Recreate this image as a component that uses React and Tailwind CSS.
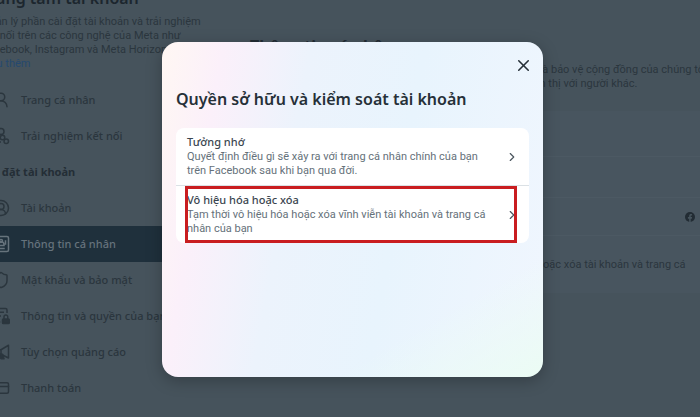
import { CircleUserRound, CreditCard, Shield, UserRound, X, ChevronRight } from 'lucide-react';

const profileLinks = [
  { label: 'Trang cá nhân', icon: <UserRound size={18} strokeWidth={2} /> },
  { label: 'Trải nghiệm kết nối', icon: <ConnectedIcon /> },
];

const settingLinks = [
  { label: 'Tài khoản', icon: <CircleUserRound size={18} strokeWidth={2} /> },
  { label: 'Thông tin cá nhân', icon: <IdCardIcon />, active: true },
  { label: 'Mật khẩu và bảo mật', icon: <Shield size={18} strokeWidth={2} /> },
  { label: 'Thông tin và quyền của bạn', icon: <DataLockIcon /> },
  { label: 'Tùy chọn quảng cáo', icon: <MegaphoneIcon /> },
  { label: 'Thanh toán', icon: <CreditCard size={18} strokeWidth={2} /> },
];

const options = [
  {
    title: 'Tưởng nhớ',
    text: 'Quyết định điều gì sẽ xảy ra với trang cá nhân chính của bạn trên Facebook sau khi bạn qua đời.',
  },
  {
    title: 'Vô hiệu hóa hoặc xóa',
    text: 'Tạm thời vô hiệu hóa hoặc xóa vĩnh viễn tài khoản và trang cá nhân của bạn',
    highlighted: true,
  },
];

export default function App() {
  return (
    <div className="relative h-screen overflow-hidden bg-[#46535c] font-['Noto_Sans',sans-serif] text-[11px] leading-[14px] text-[#2b363e]">
      <div className="flex">
        <Sidebar />
        <PersonalInfo />
      </div>
      <div className="absolute inset-0 flex items-center justify-center pt-[2px] pl-[5px]">
        <OwnershipDialog />
      </div>
    </div>
  );
}

function Sidebar() {
  return (
    <aside className="-mt-[14px] -ml-5 w-60 shrink-0">
      <div className="pb-[11px]">
        <h1 className="text-base leading-6 font-semibold whitespace-nowrap text-[#1c262e]">Trung tâm tài khoản</h1>
        <p className="pt-[5px] pl-[2px] font-[Roboto,sans-serif]">
          Quản lý phần cài đặt tài khoản và trải nghiệm
          <br />
          kết nối trên các công nghệ của Meta như
          <br />
          Facebook, Instagram và Meta Horizon.{' '}
          <a href="#more" className="text-[#25496f]">
            Tìm
            <br />
            hiểu thêm
          </a>
        </p>
      </div>
      <nav>
        <NavList links={profileLinks} />
        <h2 className="flex h-9 items-center pl-[2px] text-[11px] font-bold text-[#242e36]">Cài đặt tài khoản</h2>
        <NavList links={settingLinks} />
      </nav>
    </aside>
  );
}

function NavList({ links }) {
  return (
    <ul>
      {links.map((link) => (
        <li key={link.label}>
          <a
            href="#settings"
            aria-current={link.active ? 'page' : undefined}
            className={`flex h-9 items-center gap-[11px] pl-3 font-medium ${link.active ? 'bg-[#1f303c] text-[#66737c]' : ''}`}
          >
            {link.icon}
            {link.label}
          </a>
        </li>
      ))}
    </ul>
  );
}

function PersonalInfo() {
  return (
    <main className="min-w-0 flex-1 pt-[34px] pl-[30px]">
      <h2 className="text-base leading-6 font-bold text-[#222c34]">Thông tin cá nhân</h2>
      <div className="pt-[5px] font-[Roboto,sans-serif] whitespace-nowrap">
        <p className="pl-[287px]">và bảo vệ cộng đồng của chúng tôi.</p>
        <p className="pl-[275px]">hiển thị với người khác.</p>
      </div>
      <div className="mt-5 mr-[-12px] rounded-lg bg-[#48555f]">
        <div className="h-[46px] border-b border-[#4c5963]" />
        <div className="h-[41px] border-b border-[#4c5963]" />
        <div className="flex h-[38px] items-center justify-end border-b border-[#4c5963] pr-[17px]">
          <FacebookIcon />
        </div>
        <div className="flex h-[57px] items-center pl-[287px] font-[Roboto,sans-serif] whitespace-nowrap">
          hoặc xóa tài khoản và trang cá
        </div>
      </div>
    </main>
  );
}

function OwnershipDialog() {
  return (
    <section
      role="dialog"
      aria-labelledby="dialog-title"
      className="min-h-[335px] w-full max-w-[381px] rounded-2xl bg-[linear-gradient(150deg,transparent_78%,#ebfcf4_100%),linear-gradient(100deg,#fff7f3_0%,#fbf0fa_14%,#ecf3fc_34%,#e8f4fd_60%,#f0f6fe_100%)] bg-[#f0f6fe] px-[14px] shadow-[0_4px_16px_rgba(0,0,0,0.25)]"
    >
      <div className="flex justify-end pt-[14px]">
        <button type="button" aria-label="Đóng" className="-mr-1 text-[#263038]">
          <X size={19} strokeWidth={2} />
        </button>
      </div>
      <h2 id="dialog-title" className="pt-3 text-base leading-6 font-semibold text-[#263038]">
        Quyền sở hữu và kiểm soát tài khoản
      </h2>
      <ul className="mt-[17px] divide-y divide-[#dbe1e5] rounded-lg bg-white">
        {options.map((option) => (
          <li key={option.title} className="relative">
            <button type="button" className="flex w-full items-center justify-between py-[7px] pr-[10px] pl-[11px] text-left">
              <span className="w-[304px]">
                <span className="block font-medium text-[#3b4650]">{option.title}</span>
                <span className="block pt-px font-[Roboto,sans-serif] text-[#65717a]">{option.text}</span>
              </span>
              <ChevronRight size={14} strokeWidth={2} className="text-[#4b565f]" />
            </button>
            {option.highlighted && (
              <span className="pointer-events-none absolute inset-y-0 right-3 left-[9px] border-3 border-[#c91d20]" />
            )}
          </li>
        ))}
      </ul>
    </section>
  );
}

function ConnectedIcon() {
  return (
    <svg width="18" height="18" viewBox="0 0 24 24" fill="none" stroke="currentColor" strokeWidth="2">
      <circle cx="12" cy="6" r="4" />
      <path d="M3 20v-1a6 6 0 0 1 8-5M3 20h9" />
      <circle cx="14" cy="14" r="3" />
      <circle cx="19" cy="19" r="3" />
    </svg>
  );
}

function IdCardIcon() {
  return (
    <svg width="18" height="18" viewBox="0 0 24 24" fill="none" stroke="currentColor" strokeWidth="2">
      <rect x="2" y="2" width="20" height="20" rx="2" />
      <circle cx="12" cy="8" r="2" />
      <path d="M8 13a4 4 0 0 1 8 0M7 14h10M7 18h10M18 7v6" />
    </svg>
  );
}

function DataLockIcon() {
  return (
    <svg width="18" height="18" viewBox="0 0 24 24" fill="none" stroke="currentColor" strokeWidth="2">
      <path d="M20 8V4a2 2 0 0 0-2-2H4a2 2 0 0 0-2 2v14a2 2 0 0 0 2 2h7M6 7h10M6 12h6" />
      <path d="M16 16v-3a2 2 0 0 1 5 0v3" />
      <rect x="14" y="16" width="9" height="6" rx="1" fill="currentColor" />
    </svg>
  );
}

function MegaphoneIcon() {
  return (
    <svg width="18" height="18" viewBox="0 0 24 24" fill="none" stroke="currentColor" strokeWidth="2" strokeLinejoin="round">
      <path d="M2 9v6h10l10 5V3l-10 6zM12 9v6" />
      <path d="M9 15h5l2 6h-4z" fill="currentColor" />
    </svg>
  );
}

function FacebookIcon() {
  return (
    <svg width="10" height="10" viewBox="0 0 24 24" role="img" aria-label="Facebook">
      <circle cx="12" cy="12" r="12" fill="#222c34" />
      <path
        d="M10 24v-8H7v-4h3V9.500C10 6.500 11.800 5 14.500 5c1.200 0 2 .2 2.500.3v3.200h-1.700c-1.300 0-1.600.7-1.600 1.600V12H17l-.6 4h-2.700v8z"
        fill="#46535c"
      />
    </svg>
  );
}
